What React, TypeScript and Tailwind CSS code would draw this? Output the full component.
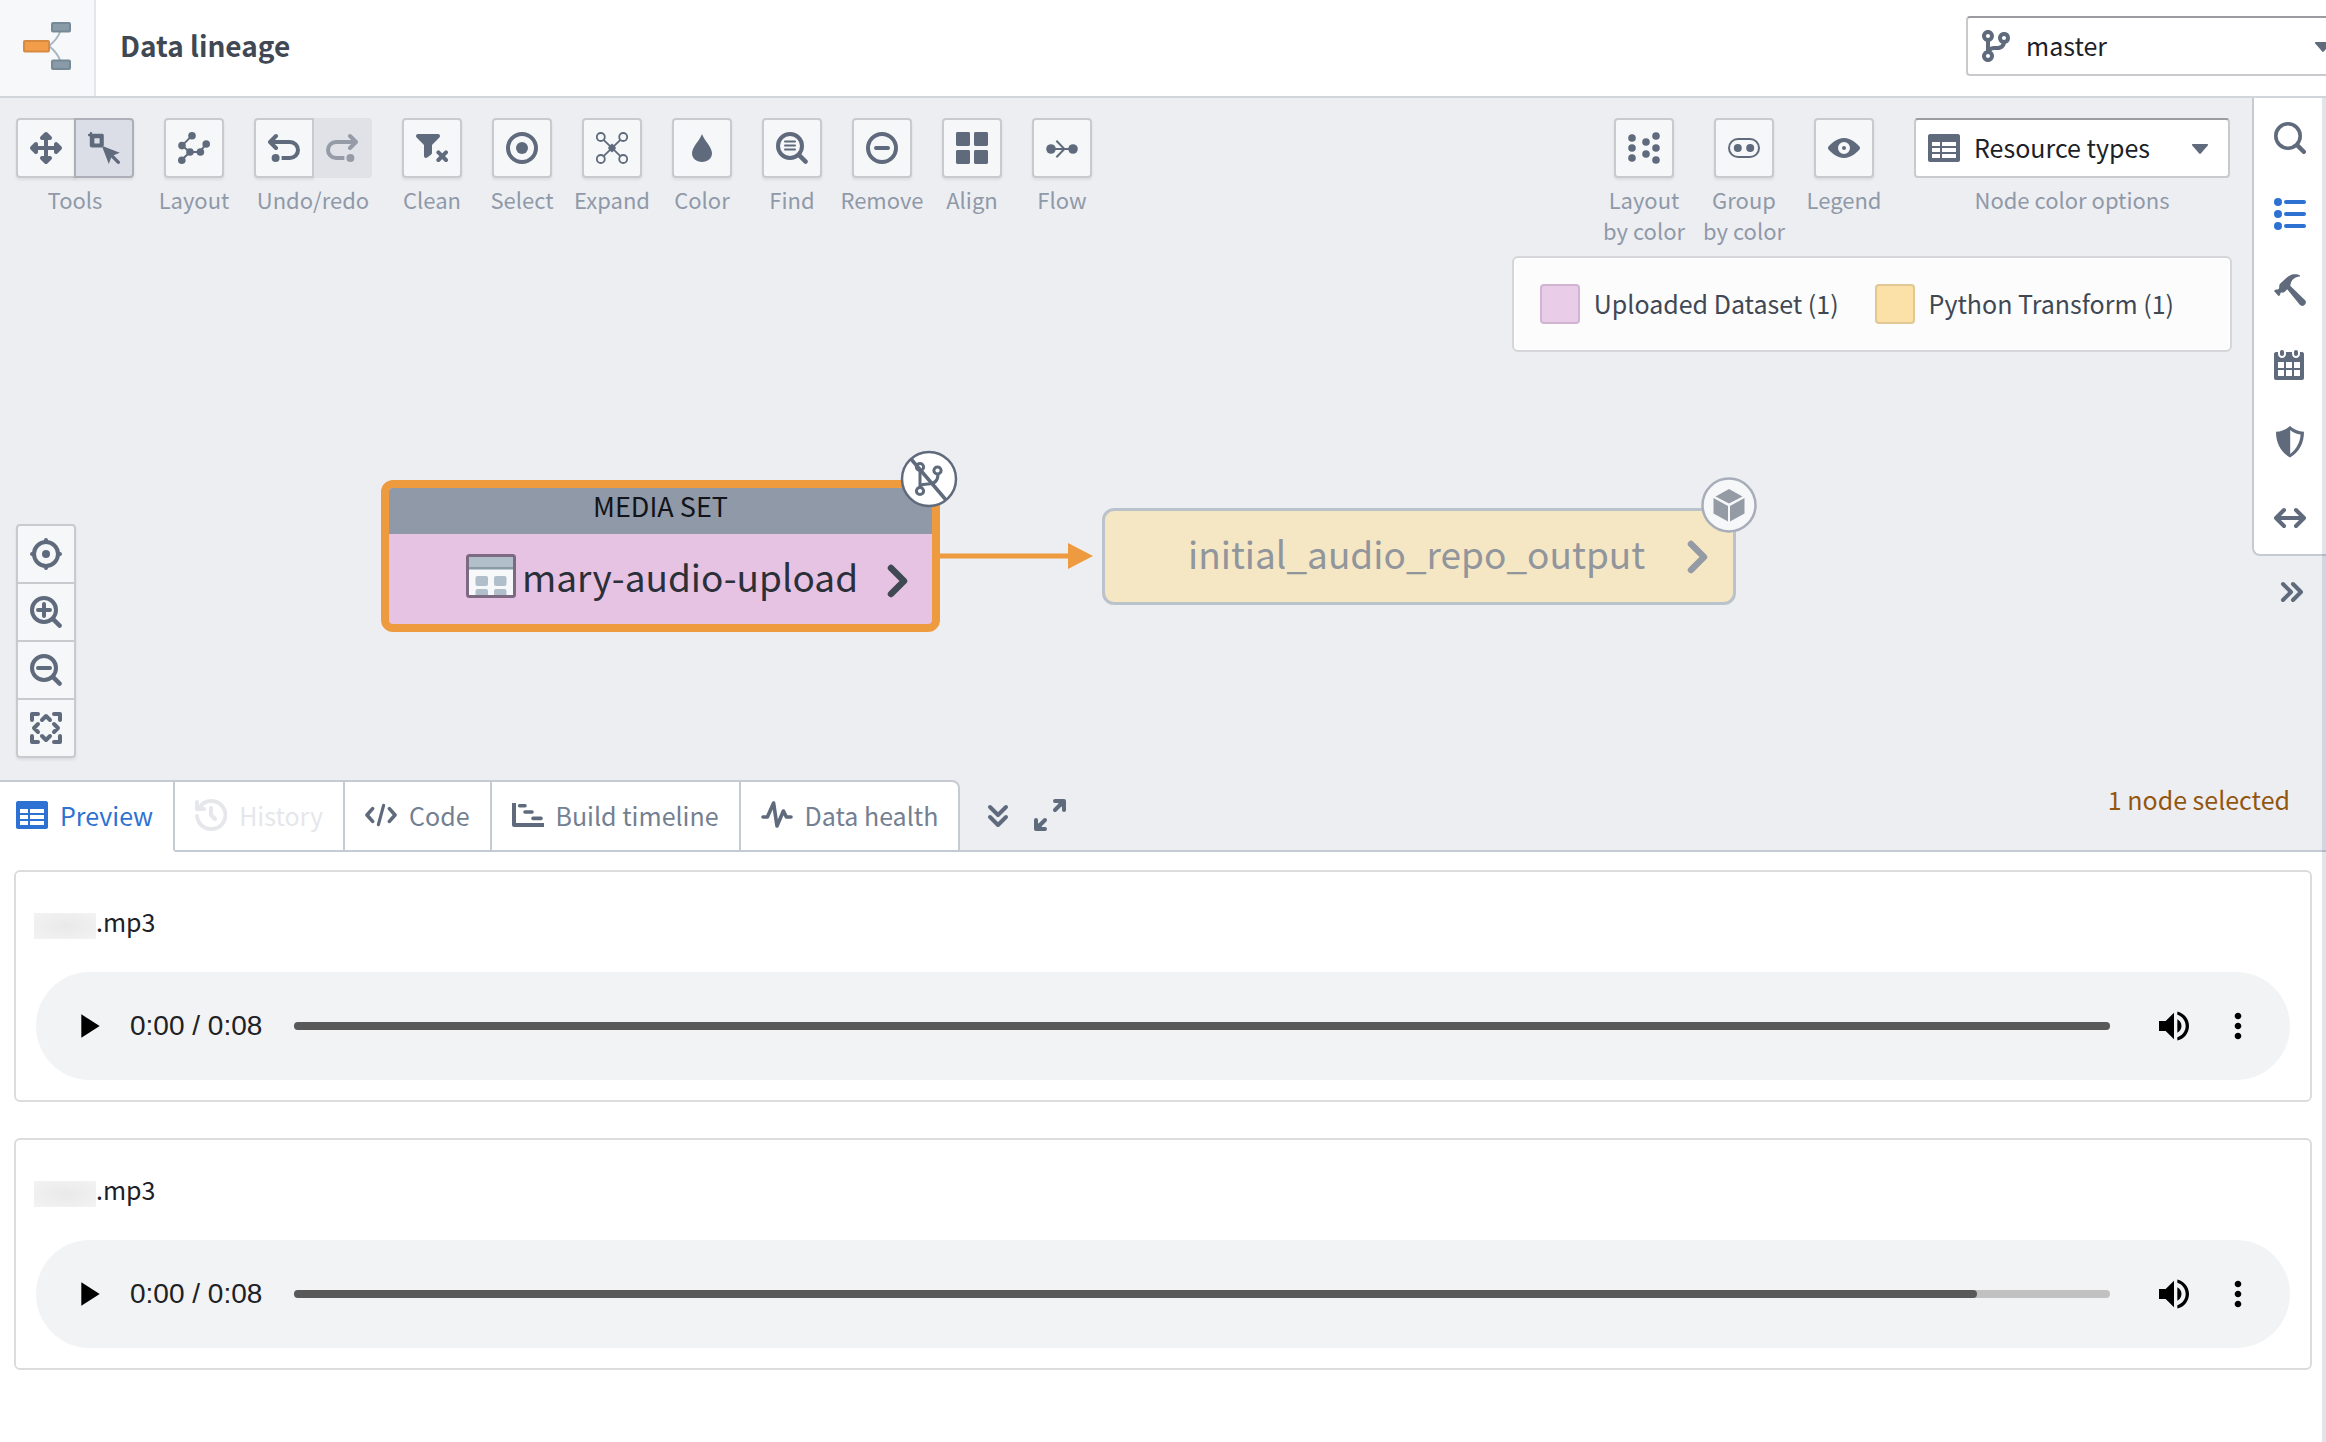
import type { ReactNode } from "react";

type IconProps = { className?: string; children: ReactNode };

/* 16-unit icon grid, shown at 32px. */
function Icon({ className = "size-8", children }: IconProps) {
  return (
    <svg viewBox="0 0 16 16" className={className} fill="currentColor" aria-hidden="true">
      {children}
    </svg>
  );
}

type LineProps = { d: string; width?: number };
function Line({ d, width = 2 }: LineProps) {
  return <path d={d} fill="none" stroke="currentColor" strokeWidth={width} strokeLinecap="round" strokeLinejoin="round" />;
}
function Ring({ cx, cy, r, width = 2 }: { cx: number; cy: number; r: number; width?: number }) {
  return <circle cx={cx} cy={cy} r={r} fill="none" stroke="currentColor" strokeWidth={width} />;
}

const MoveIcon = () => (
  <Icon>
    <path d="M15.71 7.29l-2-2A1.003 1.003 0 0012 6v1H9V4h1a1.003 1.003 0 00.71-1.71l-2-2C8.53.11 8.28 0 8 0s-.53.11-.71.29l-2 2A1.003 1.003 0 006 4h1v3H4V6a1.003 1.003 0 00-1.71-.71l-2 2C.11 7.47 0 7.72 0 8s.11.53.29.71l2 2A1.003 1.003 0 004 10V9h3v3H6a1.003 1.003 0 00-.71 1.71l2 2c.18.18.43.29.71.29s.53-.11.71-.29l2-2A1.003 1.003 0 0010 12H9V9h3v1a1.003 1.003 0 001.71.71l2-2c.18-.18.29-.43.29-.71s-.11-.53-.29-.71z" />
  </Icon>
);
const SelectionIcon = () => (
  <Icon>
    <path
      fillRule="evenodd"
      d="M1.5 0c.4 0 .6.3.6.9h4.9c.6 0 .9.3.9.9v5L7 7.8H1.9c-.6 0-1-.4-1-1V2.2C.3 2.2 0 2 0 1.5S.3.9.9.9C.9.3 1.1 0 1.5 0zM3.2 3.1v2.6h2.6V3.1z"
    />
    <path d="M6.9 6.9l9 3.5-3.1 1.2 3 3c.7.8-.4 1.9-1.2 1.2l-3-3-1.2 3.2z" />
  </Icon>
);
const GraphIcon = () => (
  <Icon>
    <Line width={1} d="M7 1.8L2 6.8 6 10l-4.2 4M6 10h5l3-4.2" />
    {[[7, 1.9], [2, 6.8], [14.1, 6], [6, 10], [11.2, 10], [1.9, 14.1]].map(([x, y]) => (
      <circle key={`${x}-${y}`} cx={x} cy={y} r={1.9} />
    ))}
  </Icon>
);
const UndoIcon = () => (
  <Icon>
    <path d="M1.5 5H11a4 4 0 010 8H6.8" fill="none" stroke="currentColor" strokeWidth={2} />
    <Line d="M4 2L1 5l3 3" />
    <circle cx={3.8} cy={13} r={2} />
  </Icon>
);
const RedoIcon = () => (
  <Icon>
    <path d="M14.5 5H5a4 4 0 000 8h4.2" fill="none" stroke="currentColor" strokeWidth={2} />
    <Line d="M12 2l3 3-3 3" />
    <circle cx={12.2} cy={13} r={2} />
  </Icon>
);
const FilterRemoveIcon = () => (
  <Icon>
    <path d="M1 1h10c.9 0 1.3 1 .7 1.7L8 6.5v3.9c0 .4-.1.6-.4.8l-2 1.5C5 13.2 4 12.9 4 12V6.5L.3 2.7C-.3 2 .1 1 1 1z" />
    <Line d="M11.2 10.2L15 14M15 10.2L11.2 14" />
  </Icon>
);
const TargetIcon = () => (
  <Icon>
    <Ring cx={8} cy={8} r={7} />
    <circle cx={8} cy={8} r={3} />
  </Icon>
);
const ExpandIcon = () => (
  <Icon>
    <Line width={0.9} d="M3.8 3.9l8.4 8.2M12.2 3.9L3.8 12.1" />
    <path d="M8 5.8L10 8l-2 2.2L6 8z" />
    <circle cx={8} cy={8} r={1.7} />
    {[[2.4, 2.5], [13.6, 2.5], [2.4, 13.5], [13.6, 13.5]].map(([x, y]) => (
      <Ring key={`${x}-${y}`} cx={x} cy={y} r={2} width={0.9} />
    ))}
  </Icon>
);
const DropIcon = () => (
  <Icon>
    <path d="M8 1C7 4 3 7.6 3 10.6 3 13 5.2 15 8 15s5-2 5-4.4C13 7.6 9 4 8 1z" />
  </Icon>
);
const FindIcon = () => (
  <Icon>
    <Ring cx={7} cy={7} r={6} />
    <Line width={2.2} d="M11.8 11.8l3 3" />
    <Line width={1} d="M4.5 4.7h5M4.5 6.7h5M4.5 8.7h5" />
  </Icon>
);
const RemoveIcon = () => (
  <Icon>
    <Ring cx={8} cy={8} r={7} />
    <Line d="M5 8h6" />
  </Icon>
);
const AlignIcon = () => (
  <Icon>
    {[[0, 0], [9, 0], [0, 9], [9, 9]].map(([x, y]) => (
      <rect key={`${x}-${y}`} x={x} y={y} width={7} height={7} rx={0.7} />
    ))}
  </Icon>
);
const FlowIcon = () => (
  <Icon>
    <circle cx={2.5} cy={8.5} r={2.4} />
    <circle cx={13.5} cy={8.5} r={2.4} />
    <path d="M2.5 8.5h11M5.2 4.4l4 4.1-4 4.1" fill="none" stroke="currentColor" strokeWidth={1} />
  </Icon>
);
const LayoutByColorIcon = () => (
  <Icon>
    {[[2, 3], [2, 8], [2, 13], [9, 5], [9, 11], [14, 2], [14, 8], [14, 14]].map(([x, y]) => (
      <circle key={`${x}-${y}`} cx={x} cy={y} r={1.9} />
    ))}
  </Icon>
);
const GroupIcon = () => (
  <Icon>
    <rect x={0.5} y={3.5} width={15} height={9} rx={4.5} fill="none" stroke="currentColor" strokeWidth={1} />
    <circle cx={4.9} cy={8} r={2} />
    <circle cx={11.1} cy={8} r={2} />
  </Icon>
);
const EyeIcon = () => (
  <Icon>
    <path
      fillRule="evenodd"
      d="M15.8 7.4C14.7 6 11.5 3 8 3S1.3 6 .2 7.4a1 1 0 000 1.2C1.3 10 4.5 13 8 13s6.7-3 7.8-4.4a1 1 0 000-1.2zM8 11a3 3 0 110-6 3 3 0 010 6z"
    />
    <circle cx={8} cy={8} r={1} />
  </Icon>
);
const TableIcon = () => (
  <Icon>
    <path d="M15 1H1c-.6 0-1 .5-1 1v12c0 .6.4 1 1 1h14c.6 0 1-.4 1-1V2c0-.5-.4-1-1-1zM6 13H2v-2h4v2zm0-3H2V8h4v2zm0-3H2V5h4v2zm8 6H7v-2h7v2zm0-3H7V8h7v2zm0-3H7V5h7v2z" />
  </Icon>
);
const BranchIcon = () => (
  <Icon>
    <path d="M12 1c-1.66 0-3 1.34-3 3 0 1.25.76 2.32 1.85 2.77A2.02 2.02 0 019 8H7c-.73 0-1.41.21-2 .55V5.82C6.16 5.4 7 4.3 7 3c0-1.66-1.34-3-3-3S1 1.34 1 3c0 1.3.84 2.4 2 2.82v4.37C1.84 10.6 1 11.7 1 13c0 1.66 1.34 3 3 3s3-1.34 3-3c0-1.04-.53-1.95-1.32-2.49.35-.31.81-.51 1.32-.51h2c1.92 0 3.52-1.35 3.91-3.15A2.996 2.996 0 0012 1zM4 2c.55 0 1 .45 1 1s-.45 1-1 1-1-.45-1-1 .45-1 1-1zm0 12c-.55 0-1-.45-1-1s.45-1 1-1 1 .45 1 1-.45 1-1 1zm8-9c-.55 0-1-.45-1-1s.45-1 1-1 1 .45 1 1-.45 1-1 1z" />
  </Icon>
);
const CaretIcon = () => (
  <Icon>
    <path d="M4.4 6h7.2c.4 0 .6.5.3.8l-3.5 4c-.2.3-.6.3-.8 0l-3.5-4C3.8 6.5 4 6 4.4 6z" />
  </Icon>
);
const SearchIcon = () => (
  <Icon>
    <Ring cx={7} cy={7} r={6.1} width={1.8} />
    <Line width={2.2} d="M11.8 11.8l3.1 3.1" />
  </Icon>
);
const PropertiesIcon = () => (
  <Icon>
    {[2, 8, 14].map((y) => (
      <g key={y}>
        <circle cx={2} cy={y} r={2} />
        <rect x={5} y={y - 1} width={11} height={2} rx={1} />
      </g>
    ))}
  </Icon>
);
const HammerIcon = () => (
  <Icon>
    <path d="M13 .7C12 0 10.5-.1 9 .3 7.5.8 6 2 4.8 3.2 3.3 4.5 2.6 5 2.6 6.1c0 .6.1 1-.3 1.4-.4.4-.8.1-1.3.3-.3.1-.7.4-1 .7l2 2.300c.3.3.7.1.9-.2.3-.3.1-.7.4-1.1.4-.4.8-.1 1.4-.2.5-.1 1-.8 1.9-1.7l6.2 7.700c.7.8 1.7.9 2.4.2l.3-.3c.7-.7.6-1.7-.2-2.300L8.1 5.900c.3-1.1.5-2.200 1.200-3 .9-1 2.100-1.700 3.700-1.700z" />
  </Icon>
);
const CalendarIcon = () => (
  <Icon>
    <path d="M11 3c.6 0 1-.5 1-1V1c0-.6-.4-1-1-1s-1 .4-1 1v1c0 .5.4 1 1 1zm3-2h-1v1c0 1.1-.9 2-2 2s-2-.9-2-2V1H6v1c0 1.1-.9 2-2 2s-2-.9-2-2V1H1c-.6 0-1 .5-1 1v12c0 .6.4 1 1 1h13c.6 0 1-.4 1-1V2c0-.6-.5-1-1-1zM5 13H2v-3h3v3zm0-4H2V6h3v3zm4 4H6v-3h3v3zm0-4H6V6h3v3zm4 4h-3v-3h3v3zm0-4h-3V6h3v3zM4 3c.6 0 1-.5 1-1V1c0-.6-.4-1-1-1S3 .4 3 1v1c0 .5.4 1 1 1z" />
  </Icon>
);
const ShieldIcon = () => (
  <Icon>
    <path
      fillRule="evenodd"
      d="M8 0C6.2 1.7 3.8 2.7 1 2.900c0 5.600 2.300 10.200 7 12.900 4.700-2.700 7-7.300 7-12.900C12.200 2.700 9.800 1.700 8 0zM8.100 2c1.400 1.200 3.100 2 5.200 2.300-.3 3.900-2 7.300-5.200 9.700z"
    />
  </Icon>
);
const ArrowsIcon = () => (
  <Icon>
    <Line d="M2 8h12M5 4L1 8l4 4M11 4l4 4-4 4" />
  </Icon>
);
const DoubleRightIcon = () => (
  <Icon>
    <Line d="M5 4l4 4-4 4M10 4l4 4-4 4" />
  </Icon>
);
const DoubleDownIcon = () => (
  <Icon>
    <Line d="M4 4l4 4 4-4M4 9l4 4 4-4" />
  </Icon>
);
const FullscreenIcon = () => (
  <Icon>
    <Line d="M10.5 1H15v4.5M14.5 1.5l-4 4M5.5 15H1v-4.5M1.5 14.5l4-4" />
    <path d="M11 1h4v4zM5 15H1v-4z" />
  </Icon>
);
const LocateIcon = () => (
  <Icon>
    <Ring cx={8} cy={8} r={6} />
    <circle cx={8} cy={8} r={2} />
    <Line d="M8 1v1M8 14v1M1 8h1M14 8h1" />
  </Icon>
);
const ZoomInIcon = () => (
  <Icon>
    <Ring cx={7} cy={7} r={6} />
    <Line width={2.2} d="M11.8 11.8l3 3" />
    <Line d="M7 4v6M4 7h6" />
  </Icon>
);
const ZoomOutIcon = () => (
  <Icon>
    <Ring cx={7} cy={7} r={6} />
    <Line width={2.2} d="M11.8 11.8l3 3" />
    <Line d="M4 7h6" />
  </Icon>
);
const ZoomFitIcon = () => (
  <Icon>
    <Line d="M1 4V1h3M12 1h3v3M15 12v3h-3M4 15H1v-3M6 4l2-2 2 2M12 6l2 2-2 2M10 12l-2 2-2-2M4 10L2 8l2-2" />
  </Icon>
);
const HistoryIcon = () => (
  <Icon>
    <path d="M2.3 4.2A7 7 0 118 15a7 7 0 01-7-6.5" fill="none" stroke="currentColor" strokeWidth={1.9} strokeLinecap="round" />
    <Line d="M1 1.5V5h3.5" />
    <Line d="M8 4.5V8l2 2" />
  </Icon>
);
const CodeIcon = () => (
  <Icon>
    <Line width={1.8} d="M3.8 4.8L1 8l2.800 3.200M12.200 4.800L15 8l-2.800 3.200" />
    <Line width={1.6} d="M9.3 3.2L6.7 12.8" />
  </Icon>
);
const GanttIcon = () => (
  <Icon>
    <path d="M1 2v11h15" fill="none" stroke="currentColor" strokeWidth={2} strokeLinejoin="round" />
    <Line width={1.8} d="M3.8 3.4h2.7M6.5 6.5H10M10.5 9.7h4" />
  </Icon>
);
const PulseIcon = () => (
  <Icon>
    <Line width={1.8} d="M1 9h2.2L6.3 2 8 13.5 11.2 6l1.5 3H15" />
  </Icon>
);

/* ---------- shared pieces ---------- */

const buttonBase =
  "flex size-[60px] items-center justify-center border-2 border-[#c9cacd] bg-[#f6f7f9] text-[#5f6b7c] shadow-[0_2px_3px_rgba(17,20,24,0.08)]";

function Caption({ children }: { children: ReactNode }) {
  return <span className="mt-1.5 text-center text-[22px] leading-[31px] whitespace-pre text-[#8f99a8]">{children}</span>;
}

function Tool({ label, caption, icon }: { label: string; caption?: string; icon: ReactNode }) {
  return (
    <div className="flex w-[60px] flex-col items-center">
      <button type="button" aria-label={label} className={`${buttonBase} rounded-sm`}>
        {icon}
      </button>
      <Caption>{caption ?? label}</Caption>
    </div>
  );
}

type SelectProps = { label: string; icon: ReactNode; value: string; options: string[]; className: string };
function IconSelect({ label, icon, value, options, className }: SelectProps) {
  return (
    <div className={`relative text-[#5f6b7c] ${className}`}>
      <select
        aria-label={label}
        defaultValue={value}
        className="h-[60px] w-full appearance-none rounded-sm border-2 border-[#c9cacd] border-t-[#9b9ca1] bg-white pl-[58px] text-[25px] text-[#1c2127]"
      >
        {options.map((o) => (
          <option key={o}>{o}</option>
        ))}
      </select>
      <span className="pointer-events-none absolute top-3.5 left-3.5">{icon}</span>
      <span className="pointer-events-none absolute top-3.5 right-3.5">
        <CaretIcon />
      </span>
    </div>
  );
}

/* ---------- header ---------- */

function Header() {
  return (
    <header className="flex h-[98px] items-center justify-between overflow-hidden border-b-2 border-[#d1d6dc] bg-white pb-1">
      <div className="flex items-center">
        <div className="-mb-1 flex h-24 w-24 items-center justify-center border-r-2 border-[#e3e6ea] bg-[#f6f8fa] pb-1">
          <svg viewBox="0 0 48 48" className="size-12" aria-hidden="true">
            <path d="M26 24c5-4 9-9 11-14M26 24c5 4 9 9 11 14" fill="none" stroke="#a7b6c2" strokeWidth="2" />
            <rect x="1" y="19" width="25" height="10.5" rx="1" fill="#f29d49" stroke="#d78a40" strokeWidth="2" />
            <rect x="29" y="1" width="18" height="8.5" rx="1" fill="#8a9ba8" stroke="#768996" strokeWidth="2" />
            <rect x="29" y="38.5" width="18" height="8.5" rx="1" fill="#8a9ba8" stroke="#768996" strokeWidth="2" />
          </svg>
        </div>
        <h1 className="ml-6 pb-0.5 text-[28px] leading-10 font-bold text-[#404854]">Data lineage</h1>
      </div>
      <IconSelect
        label="Branch"
        icon={<BranchIcon />}
        value="master"
        options={["master", "develop"]}
        className="-mr-[27px] w-[387px] shrink-0"
      />
    </header>
  );
}

/* ---------- graph ---------- */

function Toolbar() {
  return (
    <div className="flex gap-[30px]">
      <div className="flex flex-col items-center">
        <div className="flex" role="group" aria-label="Tools">
          <button type="button" aria-label="Pan" className={`${buttonBase} rounded-l-sm`}>
            <MoveIcon />
          </button>
          <button
            type="button"
            aria-label="Select area"
            aria-pressed="true"
            className="-ml-0.5 flex size-[60px] items-center justify-center rounded-r-sm border-2 border-[#adafb8] bg-[#dcdee7] text-[#5f6b7c] shadow-[0_2px_3px_rgba(17,20,24,0.08)]"
          >
            <SelectionIcon />
          </button>
        </div>
        <Caption>Tools</Caption>
      </div>
      <Tool label="Layout" icon={<GraphIcon />} />
      <div className="flex flex-col items-center">
        <div className="flex" role="group" aria-label="Undo/redo">
          <button type="button" aria-label="Undo" className={`${buttonBase} rounded-l-sm`}>
            <UndoIcon />
          </button>
          <button
            type="button"
            aria-label="Redo"
            disabled
            className="flex h-[60px] w-[58px] items-center justify-center rounded-r-sm bg-[#e1e2e7] pr-0.5 text-[#959ca7]"
          >
            <RedoIcon />
          </button>
        </div>
        <Caption>Undo/redo</Caption>
      </div>
      <Tool label="Clean" icon={<FilterRemoveIcon />} />
      <Tool label="Select" icon={<TargetIcon />} />
      <Tool label="Expand" icon={<ExpandIcon />} />
      <Tool label="Color" icon={<DropIcon />} />
      <Tool label="Find" icon={<FindIcon />} />
      <Tool label="Remove" icon={<RemoveIcon />} />
      <Tool label="Align" icon={<AlignIcon />} />
      <Tool label="Flow" icon={<FlowIcon />} />
    </div>
  );
}

function ZoomControls() {
  const items: [string, ReactNode][] = [
    ["Center graph", <LocateIcon key="c" />],
    ["Zoom in", <ZoomInIcon key="i" />],
    ["Zoom out", <ZoomOutIcon key="o" />],
    ["Zoom to fit", <ZoomFitIcon key="f" />],
  ];
  return (
    <div className="flex w-[60px] flex-col divide-y-2 divide-[#c9cacd] rounded-sm border-2 border-[#c9cacd] bg-[#f6f7f9] text-[#5f6b7c] shadow-[0_2px_3px_rgba(17,20,24,0.08)]">
      {items.map(([label, icon]) => (
        <button key={label} type="button" aria-label={label} className="flex items-center justify-center py-3">
          {icon}
        </button>
      ))}
    </div>
  );
}

function Legend() {
  const items = [
    { label: "Uploaded Dataset (1)", swatch: "bg-[#e9cce8] border-[#d0b5d3]" },
    { label: "Python Transform (1)", swatch: "bg-[#fbe1a8] border-[#e0c894]" },
  ];
  return (
    <ul className="mt-2.5 mr-5 flex gap-9 rounded-md border-2 border-[#d5d6da] bg-[#fcfcfc] py-[26px] pr-14 pl-[26px]">
      {items.map((i) => (
        <li key={i.label} className="flex items-start gap-3.5 text-[25px] leading-[38px] whitespace-nowrap text-[#404854]">
          <span className={`size-10 rounded-sm border-2 ${i.swatch}`} />
          {i.label}
        </li>
      ))}
    </ul>
  );
}

function Rail() {
  const items: [string, ReactNode][] = [
    ["Search", <SearchIcon key="s" />],
    ["Properties", <PropertiesIcon key="p" />],
    ["Builds", <HammerIcon key="h" />],
    ["Schedules", <CalendarIcon key="c" />],
    ["Permissions", <ShieldIcon key="d" />],
    ["Compare", <ArrowsIcon key="a" />],
  ];
  return (
    <aside className="flex w-[74px] shrink-0 flex-col items-center text-[#5f6b7c]">
      <div className="flex w-full flex-col items-center gap-11 rounded-bl-lg border-b-2 border-l-2 border-[#c5cbd3] bg-white pt-6 pb-5">
        {items.map(([label, icon]) => (
          <button key={label} type="button" aria-label={label} className={label === "Properties" ? "text-[#2d72d2]" : ""}>
            {icon}
          </button>
        ))}
      </div>
      <button type="button" aria-label="Collapse panel" className="mt-5">
        <DoubleRightIcon />
      </button>
    </aside>
  );
}

function NodeChevron() {
  return (
    <svg viewBox="0 0 22 34" className="h-[34px] w-[22px] shrink-0" aria-hidden="true">
      <path d="M4 4l13 13L4 30" fill="none" stroke="currentColor" strokeWidth="6.5" strokeLinecap="round" strokeLinejoin="round" />
    </svg>
  );
}

/* Nodes and edges sit at free positions on the canvas. */
function Diagram() {
  return (
    <div className="absolute inset-0">
      <svg viewBox="0 0 160 26" className="absolute top-[445px] left-[938px] h-[26px] w-40" aria-hidden="true">
        <path d="M0 13h132" stroke="#ee9a3e" strokeWidth="5" />
        <path d="M130 0l25 13-25 13z" fill="#ee9a3e" />
      </svg>

      <div className="absolute top-[382px] left-[381px] w-[559px] rounded-xl border-8 border-[#ee9a3e] bg-[#e6c2e3]">
        <div className="h-[46px] rounded-t-sm bg-[#9099a8] text-center text-[27px] leading-[36px] text-[#111418]">MEDIA SET</div>
        <div className="flex h-[90px] items-center pr-[23px] pb-1.5 pl-[77px] text-[#404854]">
          <svg viewBox="0 0 50 44" className="mr-1.5 h-11 w-[50px] shrink-0" aria-hidden="true">
            <rect x="1.5" y="1.5" width="47" height="41" rx="2" fill="#f6f8fa" stroke="#7b6a82" strokeWidth="3" />
            <path d="M3 3h44v10H3z" fill="#b1bfca" />
            <path d="M3 13h44v2.5H3z" fill="#8a9ba8" />
            <rect x="9.5" y="22" width="12.5" height="10" rx="2" fill="#b1bfca" />
            <rect x="28" y="22" width="12.5" height="10" rx="2" fill="#b1bfca" />
            <path d="M9.5 41v-4q0-2 2-2H20q2 0 2 2v4zM28 41v-4q0-2 2-2h8.5q2 0 2 2v4z" fill="#b1bfca" />
          </svg>
          <span className="text-[37px] leading-[54px] text-[#2b3038]">mary-audio-upload</span>
          <span className="ml-auto pt-2.5">
            <NodeChevron />
          </span>
        </div>
        <svg viewBox="-29 -29 58 58" className="absolute -top-[38px] -right-[26px] size-[58px]" aria-hidden="true">
          <circle r="27" fill="#fff" stroke="#5f6b7c" strokeWidth="2.5" />
          <g fill="none" stroke="#5f6b7c" strokeWidth="3">
            <circle cx="-9" cy="-12" r="3.6" />
            <circle cx="8.5" cy="-8.5" r="3.6" />
            <circle cx="-9" cy="12" r="3.6" />
            <path d="M-9-8.5v17M9-5C9 2 5 5-1 5-5 5-8 5-9 8" />
            <path d="M-18-20L17 21" strokeWidth="3.5" />
          </g>
        </svg>
      </div>

      <div className="absolute top-[410px] left-[1102px] flex h-[97px] w-[634px] items-center rounded-xl border-[3px] border-[#bac2cb] bg-[#f5e6c4] pr-6 pl-[83px] text-[#959ba5]">
        <span className="pb-2 text-[37px] leading-[54px] text-[#91959c]">initial_audio_repo_output</span>
        <span className="ml-auto">
          <NodeChevron />
        </span>
        <svg viewBox="-29 -29 58 58" className="absolute -top-[35px] -right-[25px] size-[58px]" aria-hidden="true">
          <circle r="26.5" fill="#f6f7f9" stroke="#a7aeb9" strokeWidth="2.5" />
          <path d="M0-16l13.5 7.5L0-1.5l-13.5-7zM-15.5-7L-1 1v15.5l-14.5-8zM15.5-7L1 1v15.5l14.500-8z" fill="#959ba5" />
        </svg>
      </div>
    </div>
  );
}

function Canvas() {
  return (
    <section aria-label="Lineage graph" className="relative flex min-h-[682px] flex-1">
      <Diagram />
      <div className="relative flex flex-1 justify-between">
        <div className="flex flex-col justify-between pt-5 pb-[22px] pl-4">
          <Toolbar />
          <ZoomControls />
        </div>
        <div className="flex flex-col items-end pt-5">
          <div className="flex gap-10 pr-[22px]">
            <Tool label="Layout by color" caption={"Layout\nby color"} icon={<LayoutByColorIcon />} />
            <Tool label="Group by color" caption={"Group\nby color"} icon={<GroupIcon />} />
            <Tool label="Legend" icon={<EyeIcon />} />
            <div className="flex flex-col items-center">
              <IconSelect
                label="Node color options"
                icon={<TableIcon />}
                value="Resource types"
                options={["Resource types", "Build status"]}
                className="w-[316px]"
              />
              <Caption>Node color options</Caption>
            </div>
          </div>
          <Legend />
        </div>
      </div>
      <div className="relative flex">
        <Rail />
      </div>
    </section>
  );
}

/* ---------- bottom panel ---------- */

function TabBar() {
  const tabs = [
    { label: "Preview", icon: <TableIcon />, style: "pl-4 border-b-white text-[#2d72d2]", iconColor: "" },
    { label: "History", icon: <HistoryIcon />, style: "pl-5 text-[#e5e7eb]", iconColor: "" },
    { label: "Code", icon: <CodeIcon />, style: "pl-5 text-[#738091]", iconColor: "text-[#5f6b7c]" },
    { label: "Build timeline", icon: <GanttIcon />, style: "pl-5 text-[#738091]", iconColor: "text-[#5f6b7c]" },
    { label: "Data health", icon: <PulseIcon />, style: "pl-5 rounded-tr-lg text-[#738091]", iconColor: "text-[#5f6b7c]" },
  ];
  return (
    <div className="flex">
      <div role="tablist" className="flex">
        {tabs.map((t, i) => (
          <button
            key={t.label}
            type="button"
            role="tab"
            aria-selected={i === 0}
            disabled={t.label === "History"}
            className={`flex h-[72px] items-center gap-3 border-y-2 border-r-2 border-[#c5cbd3] bg-white pr-5 pb-0.5 text-[25px] leading-9 whitespace-nowrap ${t.style}`}
          >
            <span className={t.iconColor}>{t.icon}</span>
            {t.label}
          </button>
        ))}
      </div>
      <div className="flex flex-1 items-center gap-5 border-b-2 border-[#c5cbd3] pr-9 pl-[22px] text-[#5f6b7c]">
        <button type="button" aria-label="Collapse">
          <DoubleDownIcon />
        </button>
        <button type="button" aria-label="Full screen">
          <FullscreenIcon />
        </button>
        <p className="ml-auto self-start text-[25px] leading-[38px] text-[#935610]">1 node selected</p>
      </div>
    </div>
  );
}

type Clip = { id: string; buffered: number };

function AudioCard({ clip }: { clip: Clip }) {
  return (
    <article className="rounded-md border-2 border-[#dcdcdd] bg-white px-[18px] pt-[31px] pb-5">
      <div className="flex h-9 items-end text-[25px] leading-9 text-[#1c2127]">
        <span aria-hidden="true" className="h-[26px] w-[62px] bg-radial from-[#e9e9e9] to-[#f3f3f3]" />
        .mp3
      </div>
      <div className="mx-0.5 mt-[33px] flex h-[108px] items-center rounded-full bg-[#f1f3f4] px-8 text-black">
        <button type="button" aria-label="Play">
          <svg viewBox="0 0 24 24" className="size-10" aria-hidden="true">
            <path d="M8 5v14l11-7z" />
          </svg>
        </button>
        <span className="ml-[22px] font-['Liberation_Sans',Arial,sans-serif] text-[28px] leading-9 whitespace-nowrap text-[#202124]">0:00 / 0:08</span>
        <div className="relative mr-11 ml-8 h-2 flex-1 rounded-full bg-[#c1c1c1]">
          <div className="h-2 rounded-full bg-[#595959]" style={{ width: `${clip.buffered}%` }} />
          <input
            type="range"
            aria-label="Playback position"
            min={0}
            max={8}
            defaultValue={0}
            className="absolute inset-0 w-full appearance-none bg-transparent [&::-webkit-slider-thumb]:opacity-0"
          />
        </div>
        <button type="button" aria-label="Mute">
          <svg viewBox="0 0 24 24" className="size-10" aria-hidden="true">
            <path d="M3 9v6h4l5 5V4L7 9H3zm13.5 3c0-1.77-1.02-3.29-2.5-4.03v8.05c1.48-.73 2.5-2.25 2.5-4.02zM14 3.23v2.06c2.89.86 5 3.54 5 6.71s-2.11 5.85-5 6.71v2.06c4.01-.91 7-4.49 7-8.77s-2.99-7.86-7-8.77z" />
          </svg>
        </button>
        <button type="button" aria-label="More options" className="ml-6">
          <svg viewBox="0 0 24 24" className="size-10" aria-hidden="true">
            <path d="M12 8c1.1 0 2-.9 2-2s-.9-2-2-2-2 .9-2 2 .9 2 2 2zm0 2c-1.1 0-2 .9-2 2s.9 2 2 2 2-.9 2-2-.9-2-2-2zm0 6c-1.1 0-2 .9-2 2s.9 2 2 2 2-.9 2-2-.9-2-2-2z" />
          </svg>
        </button>
      </div>
    </article>
  );
}

const clips: Clip[] = [
  { id: "first", buffered: 100 },
  { id: "second", buffered: 92.7 },
];

export default function App() {
  return (
    <div className="flex min-h-screen flex-col bg-white font-['Noto_Sans_CJK_SC','Source_Sans_Pro',sans-serif]">
      <Header />
      <main className="relative flex flex-1 flex-col bg-[#edeef2]">
        <Canvas />
        <TabBar />
        <div role="tabpanel" aria-label="Preview" className="flex flex-col gap-9 bg-white px-3.5 pt-[18px] pb-[72px]">
          {clips.map((c) => (
            <AudioCard key={c.id} clip={c} />
          ))}
        </div>
        <div className="pointer-events-none absolute inset-y-0 right-0 w-1 bg-[#5f6b8c]/18" aria-hidden="true" />
      </main>
    </div>
  );
}
